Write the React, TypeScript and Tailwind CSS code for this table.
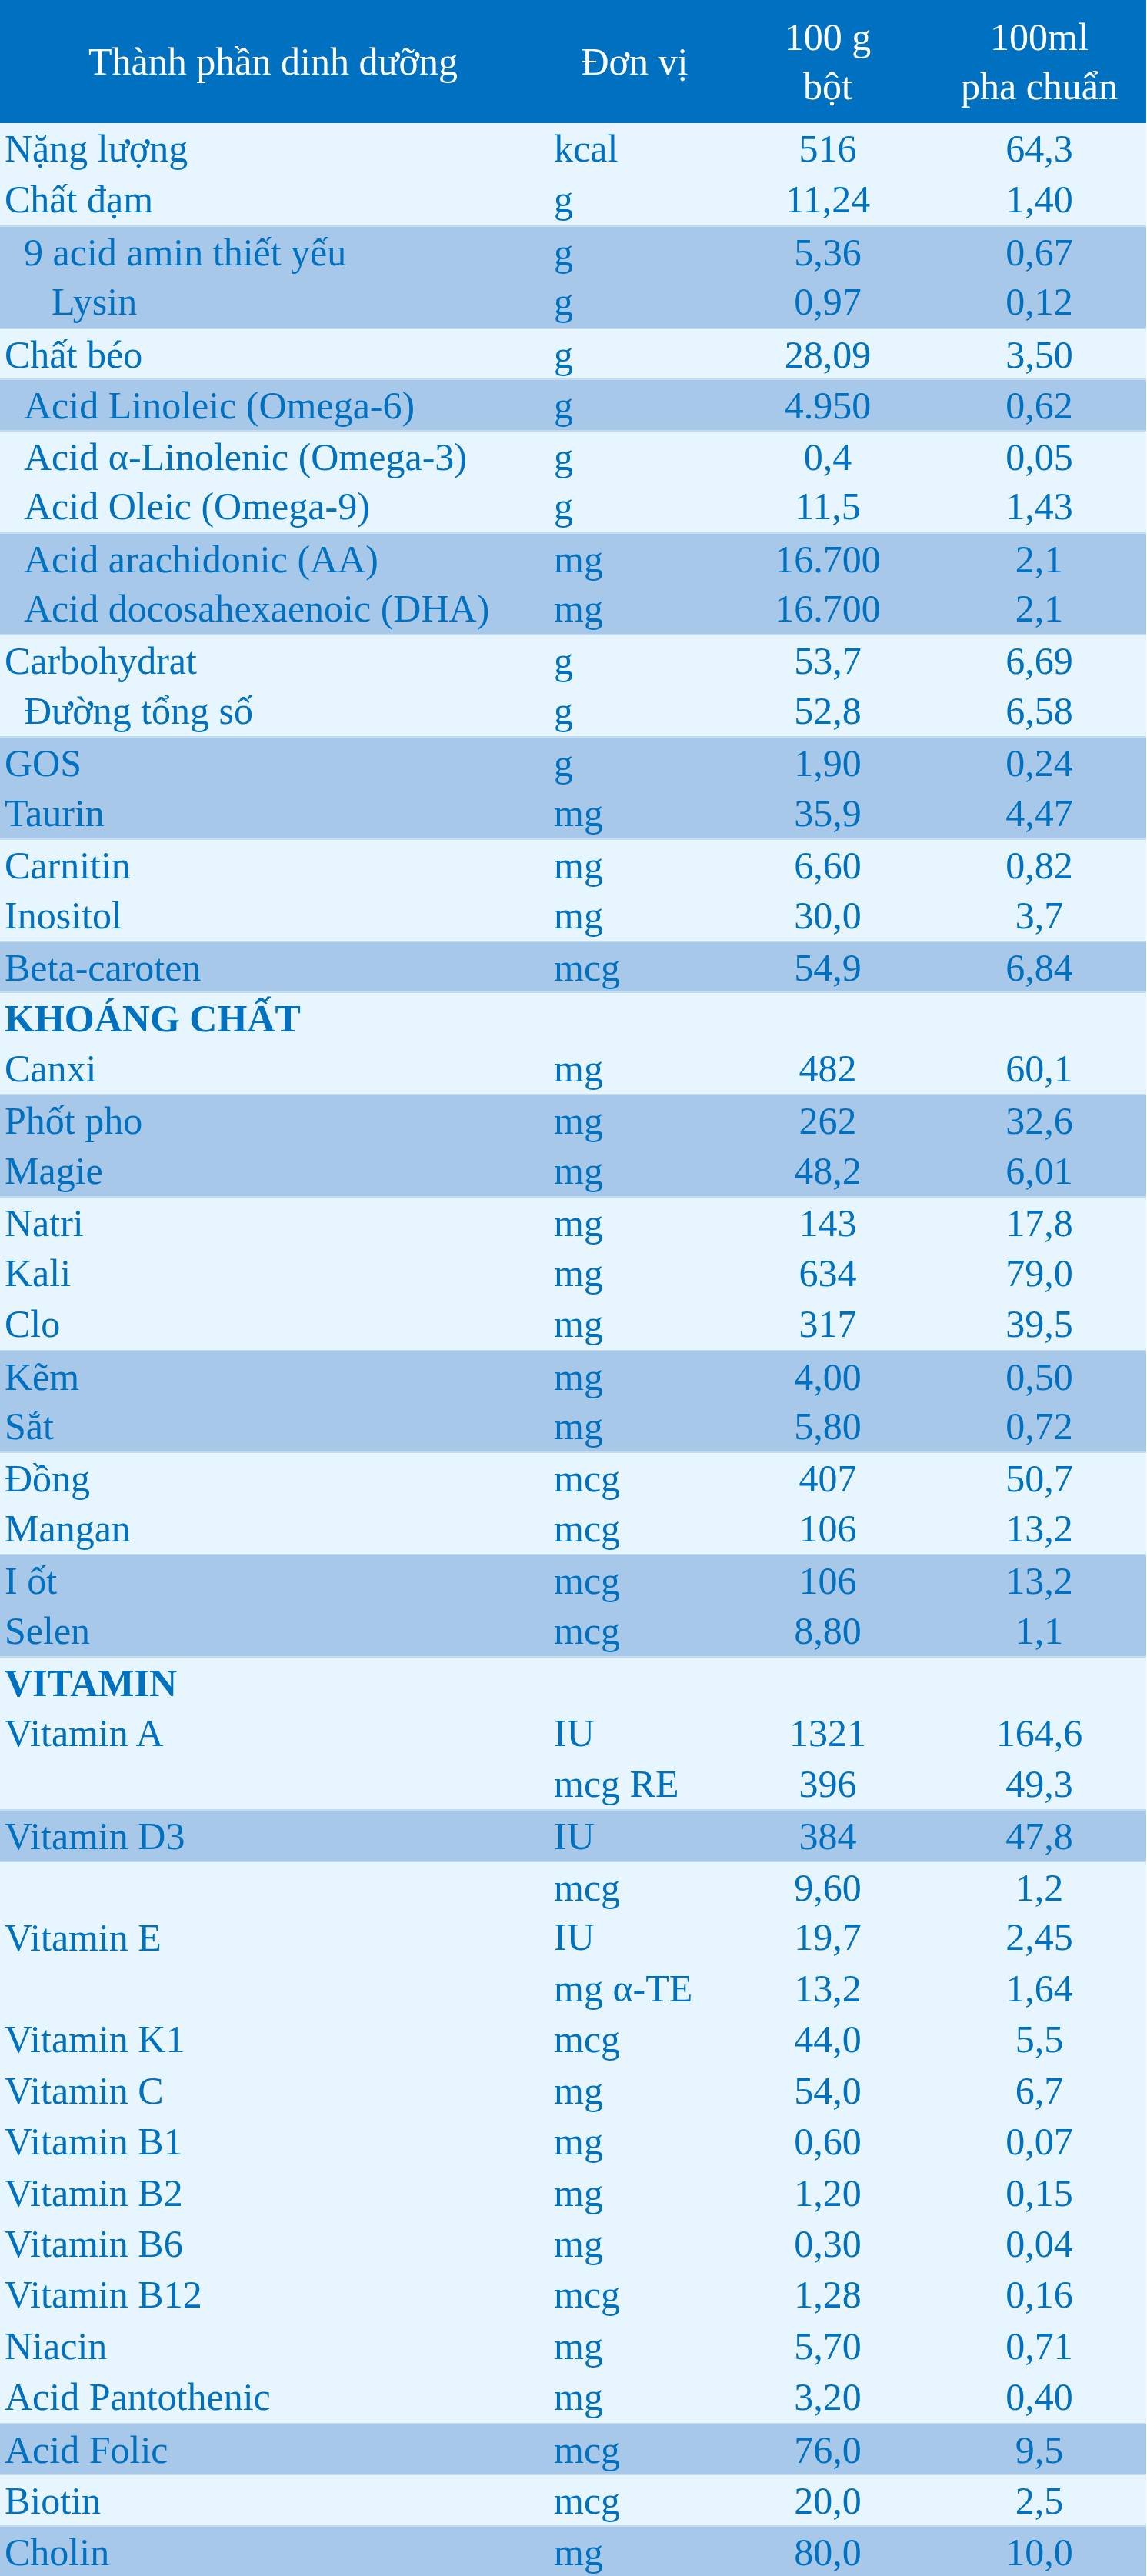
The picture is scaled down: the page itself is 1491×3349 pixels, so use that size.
type Row = {
  name?: string;
  unit: string;
  a: string;
  b: string;
  lvl?: number;
  bold?: boolean;
  span?: number;
  noName?: boolean;
};

type Group = { dark: boolean; rows: Row[] };

const groups: Group[] = [
  {
    dark: false,
    rows: [
      { name: "Nặng lượng", unit: "kcal", a: "516", b: "64,3" },
      { name: "Chất đạm", unit: "g", a: "11,24", b: "1,40" },
    ],
  },
  {
    dark: true,
    rows: [
      { name: "9 acid amin thiết yếu", unit: "g", a: "5,36", b: "0,67", lvl: 1 },
      { name: "Lysin", unit: "g", a: "0,97", b: "0,12", lvl: 2 },
    ],
  },
  { dark: false, rows: [{ name: "Chất béo", unit: "g", a: "28,09", b: "3,50" }] },
  {
    dark: true,
    rows: [{ name: "Acid Linoleic (Omega-6)", unit: "g", a: "4.950", b: "0,62", lvl: 1 }],
  },
  {
    dark: false,
    rows: [
      { name: "Acid α-Linolenic (Omega-3)", unit: "g", a: "0,4", b: "0,05", lvl: 1 },
      { name: "Acid Oleic (Omega-9)", unit: "g", a: "11,5", b: "1,43", lvl: 1 },
    ],
  },
  {
    dark: true,
    rows: [
      { name: "Acid arachidonic (AA)", unit: "mg", a: "16.700", b: "2,1", lvl: 1 },
      { name: "Acid docosahexaenoic (DHA)", unit: "mg", a: "16.700", b: "2,1", lvl: 1 },
    ],
  },
  {
    dark: false,
    rows: [
      { name: "Carbohydrat", unit: "g", a: "53,7", b: "6,69" },
      { name: "Đường tổng số", unit: "g", a: "52,8", b: "6,58", lvl: 1 },
    ],
  },
  {
    dark: true,
    rows: [
      { name: "GOS", unit: "g", a: "1,90", b: "0,24" },
      { name: "Taurin", unit: "mg", a: "35,9", b: "4,47" },
    ],
  },
  {
    dark: false,
    rows: [
      { name: "Carnitin", unit: "mg", a: "6,60", b: "0,82" },
      { name: "Inositol", unit: "mg", a: "30,0", b: "3,7" },
    ],
  },
  { dark: true, rows: [{ name: "Beta-caroten", unit: "mcg", a: "54,9", b: "6,84" }] },
  {
    dark: false,
    rows: [
      { name: "KHOÁNG CHẤT", unit: "", a: "", b: "", bold: true },
      { name: "Canxi", unit: "mg", a: "482", b: "60,1" },
    ],
  },
  {
    dark: true,
    rows: [
      { name: "Phốt pho", unit: "mg", a: "262", b: "32,6" },
      { name: "Magie", unit: "mg", a: "48,2", b: "6,01" },
    ],
  },
  {
    dark: false,
    rows: [
      { name: "Natri", unit: "mg", a: "143", b: "17,8" },
      { name: "Kali", unit: "mg", a: "634", b: "79,0" },
      { name: "Clo", unit: "mg", a: "317", b: "39,5" },
    ],
  },
  {
    dark: true,
    rows: [
      { name: "Kẽm", unit: "mg", a: "4,00", b: "0,50" },
      { name: "Sắt", unit: "mg", a: "5,80", b: "0,72" },
    ],
  },
  {
    dark: false,
    rows: [
      { name: "Đồng", unit: "mcg", a: "407", b: "50,7" },
      { name: "Mangan", unit: "mcg", a: "106", b: "13,2" },
    ],
  },
  {
    dark: true,
    rows: [
      { name: "I ốt", unit: "mcg", a: "106", b: "13,2" },
      { name: "Selen", unit: "mcg", a: "8,80", b: "1,1" },
    ],
  },
  {
    dark: false,
    rows: [
      { name: "VITAMIN", unit: "", a: "", b: "", bold: true },
      { name: "Vitamin A", unit: "IU", a: "1321", b: "164,6" },
      { name: "", unit: "mcg RE", a: "396", b: "49,3" },
    ],
  },
  { dark: true, rows: [{ name: "Vitamin D3", unit: "IU", a: "384", b: "47,8" }] },
  {
    dark: false,
    rows: [
      { name: "Vitamin E", unit: "mcg", a: "9,60", b: "1,2", span: 3 },
      { unit: "IU", a: "19,7", b: "2,45", noName: true },
      { unit: "mg α-TE", a: "13,2", b: "1,64", noName: true },
      { name: "Vitamin K1", unit: "mcg", a: "44,0", b: "5,5" },
      { name: "Vitamin C", unit: "mg", a: "54,0", b: "6,7" },
      { name: "Vitamin B1", unit: "mg", a: "0,60", b: "0,07" },
      { name: "Vitamin B2", unit: "mg", a: "1,20", b: "0,15" },
      { name: "Vitamin B6", unit: "mg", a: "0,30", b: "0,04" },
      { name: "Vitamin B12", unit: "mcg", a: "1,28", b: "0,16" },
      { name: "Niacin", unit: "mg", a: "5,70", b: "0,71" },
      { name: "Acid Pantothenic", unit: "mg", a: "3,20", b: "0,40" },
    ],
  },
  { dark: true, rows: [{ name: "Acid Folic", unit: "mcg", a: "76,0", b: "9,5" }] },
  { dark: false, rows: [{ name: "Biotin", unit: "mcg", a: "20,0", b: "2,5" }] },
  { dark: true, rows: [{ name: "Cholin", unit: "mg", a: "80,0", b: "10,0" }] },
];

const indent = ["pl-[6px]", "pl-[31px]", "pl-[67px]"];

export default function App() {
  return (
    <div
      className="w-[1491px] bg-white text-[50px] text-[#0070c0]"
      style={{ fontFamily: '"Liberation Serif", "Times New Roman", serif' }}
    >
      <div className="w-[1490px]">
        <div className="flex h-[160px] bg-[#0070c0] text-white leading-[64px]">
          <div className="w-[710px] flex items-center justify-center">Thành phần dinh dưỡng</div>
          <div className="w-[230px] flex items-center justify-center">Đơn vị</div>
          <div className="w-[272px] flex flex-col items-center justify-center">
            <span>100 g</span>
            <span>bột</span>
          </div>
          <div className="w-[278px] flex flex-col items-center justify-center">
            <span>100ml</span>
            <span>pha chuẩn</span>
          </div>
        </div>

        <div className="grid grid-cols-[710px_230px_272px_278px] auto-rows-[66.45px] leading-[66.45px]">
          {groups.map((g, gi) =>
            g.rows.map((r, ri) => {
              const bg = g.dark ? "bg-[#a8c8ea]" : "bg-[#e7f5fe]";
              const line = gi > 0 && ri === 0 ? "border-t-2 border-[#c4dcf1]" : "";
              const key = `${gi}-${ri}`;
              return [
                !r.noName && (
                  <div
                    key={key + "n"}
                    className={`${bg} ${line} ${indent[r.lvl ?? 0]} whitespace-nowrap ${
                      r.bold ? "font-bold" : ""
                    } ${r.span === 3 ? "row-span-3 flex items-center" : ""}`}
                  >
                    {r.name}
                  </div>
                ),
                <div key={key + "u"} className={`${bg} ${line} pl-[10px] whitespace-nowrap`}>
                  {r.unit}
                </div>,
                <div key={key + "a"} className={`${bg} ${line} text-center`}>
                  {r.a}
                </div>,
                <div key={key + "b"} className={`${bg} ${line} text-center`}>
                  {r.b}
                </div>,
              ];
            })
          )}
        </div>
      </div>
    </div>
  );
}
